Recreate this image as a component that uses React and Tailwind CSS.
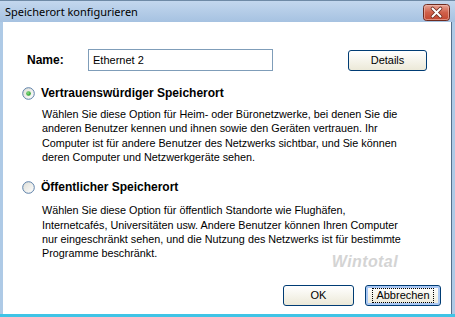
import React from "react";

const F = { fontFamily: '"Liberation Sans", Arial, sans-serif' };

function Radio({ checked }) {
  return (
    <svg width="13" height="13" viewBox="0 0 13 13" className="shrink-0">
      <defs>
        <linearGradient id="rg" x1="0" y1="0" x2="1" y2="1">
          <stop offset="0" stopColor="#dcdcd5" />
          <stop offset="1" stopColor="#ffffff" />
        </linearGradient>
        <radialGradient id="dot" cx="0.4" cy="0.4" r="0.6">
          <stop offset="0" stopColor="#8ee08e" />
          <stop offset="1" stopColor="#1f9a1f" />
        </radialGradient>
      </defs>
      <circle cx="6.5" cy="6.5" r="5.8" fill="url(#rg)" stroke="#5b7fa8" strokeWidth="1" />
      {checked && <circle cx="6.5" cy="6.5" r="2.3" fill="url(#dot)" />}
    </svg>
  );
}

function CloseBtn() {
  return (
    <svg width="27" height="17" viewBox="0 0 27 17">
      <defs>
        <linearGradient id="cg" x1="0" y1="0" x2="0" y2="1">
          <stop offset="0" stopColor="#e8a89a" />
          <stop offset="0.5" stopColor="#d0604a" />
          <stop offset="1" stopColor="#c2452e" />
        </linearGradient>
      </defs>
      <rect x="0.5" y="0.5" width="26" height="16" rx="3" fill="url(#cg)" stroke="#6e2b20" />
      <rect x="1.5" y="1.5" width="24" height="14" rx="2" fill="none" stroke="#f0c0b4" strokeOpacity="0.6" />
      <path d="M9.5 4.5 L17.5 12.5 M17.5 4.5 L9.5 12.5" stroke="#6e2b20" strokeWidth="3.6" strokeLinecap="round" />
      <path d="M9.5 4.5 L17.5 12.5 M17.5 4.5 L9.5 12.5" stroke="#ffffff" strokeWidth="2" strokeLinecap="round" />
    </svg>
  );
}

function Btn({ children, w, focus }) {
  return (
    <div
      className={`h-[21px] ${w} rounded-[3px] border border-[#003c74] bg-gradient-to-b from-[#ffffff] to-[#ece9d8] flex items-center justify-center text-[11px] text-black ${focus ? "shadow-[inset_0_0_0_2px_#a9c8f5]" : ""}`}
      style={F}
    >
      {focus ? (
        <span className="border border-dotted border-black px-[3px] leading-[13px]">{children}</span>
      ) : (
        children
      )}
    </div>
  );
}

export default function App() {
  return (
    <div className="w-[455px] h-[317px] flex flex-col bg-[#aecae6] border-t border-[#6f8aa6]" style={F}>
      <div className="h-[21px] flex items-center justify-between pl-[5px] pr-[5px] bg-gradient-to-b from-[#c3d7ee] to-[#a6c2e1]">
        <span className="text-[11px] text-black pt-[1px]" style={{ fontFamily: '"Noto Sans", "Liberation Sans", sans-serif' }}>
          Speicherort konfigurieren
        </span>
        <div className="pt-[2px]">
          <CloseBtn />
        </div>
      </div>
      <div className="flex-1 flex ml-[3px] mr-[3px] border-r border-[#54708c]">
        <div className="flex-1 bg-white flex flex-col pl-[24px] pt-[27px]">
          <div className="flex items-center h-[22px]">
            <span className="w-[61px] font-bold text-[12px] text-black">Name:</span>
            <div className="w-[185px] h-[22px] border border-[#7f9db9] flex items-center pl-[4px] text-[11px] text-black">
              Ethernet 2
            </div>
            <div className="ml-[75px]">
              <Btn w="w-[79px]">Details</Btn>
            </div>
          </div>

          <div className="flex items-center mt-[15px] h-[14px] -ml-[5px]">
            <Radio checked />
            <span className="ml-[6px] font-bold text-[12px] text-black">Vertrauenswürdiger Speicherort</span>
          </div>
          <p className="ml-[15px] mt-[7px] w-[380px] text-[10.8px] leading-[14.33px] text-black">
            Wählen Sie diese Option für Heim- oder Büronetzwerke, bei denen Sie die
            <br />
            anderen Benutzer kennen und ihnen sowie den Geräten vertrauen. Ihr
            <br />
            Computer ist für andere Benutzer des Netzwerks sichtbar, und Sie können
            <br />
            deren Computer und Netzwerkgeräte sehen.
          </p>

          <div className="flex items-center mt-[16px] h-[14px] -ml-[5px]">
            <Radio />
            <span className="ml-[6px] font-bold text-[12px] text-black">Öffentlicher Speicherort</span>
          </div>
          <p className="ml-[15px] mt-[9px] w-[380px] text-[10.8px] leading-[14.33px] text-black">
            Wählen Sie diese Option für öffentlich Standorte wie Flughäfen,
            <br />
            Internetcafés, Universitäten usw. Andere Benutzer können Ihren Computer
            <br />
            nur eingeschränkt sehen, und die Nutzung des Netzwerks ist für bestimmte
            <br />
            Programme beschränkt.
          </p>

          <div className="flex justify-end pr-[10px] relative mt-auto mb-[8px]">
            <span className="absolute right-[53px] -top-[35px] italic font-bold text-[16px] text-[#d4d4d4] tracking-wide">
              Wintotal
            </span>
            <Btn w="w-[71px]">OK</Btn>
            <div className="ml-[11px]">
              <Btn w="w-[76px]" focus>
                Abbrechen
              </Btn>
            </div>
          </div>
        </div>
      </div>
      <div className="h-[3px] bg-[#3fc4e6]" />
    </div>
  );
}
